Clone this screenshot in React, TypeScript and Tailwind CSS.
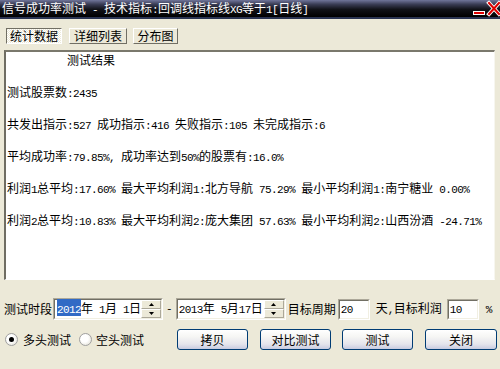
import React from 'react';

// ASCII runs get a mono face at half the CJK width, like SimSun
const Mixed: React.FC<{ text: string }> = ({ text }) => (
  <>
    {text.split(/([\x20-\x7e]+)/).map((part, i) =>
      /^[\x20-\x7e]+$/.test(part) ? (
        <span key={i} className="font-['Liberation_Mono',monospace] text-[11px] tracking-[-0.6px]">
          {part}
        </span>
      ) : (
        part
      )
    )}
  </>
);

const lines = [
  '          测试结果',
  '',
  '测试股票数:2435',
  '',
  '共发出指示:527 成功指示:416 失败指示:105 未完成指示:6',
  '',
  '平均成功率:79.85%, 成功率达到50%的股票有:16.0%',
  '',
  '利润1总平均:17.60% 最大平均利润1:北方导航 75.29% 最小平均利润1:南宁糖业 0.00%',
  '',
  '利润2总平均:10.83% 最大平均利润2:庞大集团 57.63% 最小平均利润2:山西汾酒 -24.71%',
];

const Sunken: React.FC<{ className?: string; children?: React.ReactNode }> = ({ className = '', children }) => (
  <div className={`border-t border-l border-t-[#aca899] border-l-[#aca899] border-b border-r border-b-white border-r-white ${className}`}>
    <div className="h-full w-full border-t border-l border-t-[#716f64] border-l-[#716f64] border-b border-r border-b-[#f1efe2] border-r-[#f1efe2] bg-white flex items-center">
      {children}
    </div>
  </div>
);

const Spinner = () => (
  <div className="ml-auto flex h-full w-[20px] flex-col">
    {[0, 1].map(i => (
      <div
        key={i}
        className="flex flex-1 items-center justify-center border-t border-l border-t-white border-l-white border-b border-r border-b-[#aca899] border-r-[#aca899] bg-[#ece9d8]"
      >
        <svg width="5" height="3" viewBox="0 0 5 3">
          {i === 0 ? <path d="M2.5 0 L5 3 L0 3 Z" fill="#000" /> : <path d="M0 0 L5 0 L2.5 3 Z" fill="#000" />}
        </svg>
      </div>
    ))}
  </div>
);

const Radio: React.FC<{ checked?: boolean }> = ({ checked }) => (
  <div className="flex h-[13px] w-[13px] items-center justify-center rounded-full border border-[#a0a0a0] bg-[radial-gradient(circle_at_40%_40%,#ffffff_40%,#dcd9cc_100%)]">
    {checked && <div className="h-[5px] w-[5px] rounded-full bg-[#000]" />}
  </div>
);

const XpButton: React.FC<{ label: string; className?: string }> = ({ label, className = '' }) => (
  <div
    className={`flex h-[21px] items-center justify-center rounded-[3px] border border-[#003c74] bg-[linear-gradient(to_bottom,#ffffff_0%,#f6f6f4_35%,#e4e4ec_75%,#c8cbe0_100%)] text-[12px] text-black ${className}`}
  >
    {label}
  </div>
);

export default function App() {
  return (
    <div className="flex h-[369px] w-[500px] flex-col overflow-hidden bg-[#ece9d8] font-['Noto_Sans_CJK_SC',sans-serif] text-[12px] leading-4 text-black">
      {/* title bar */}
      <div className="flex h-[17px] items-center justify-between bg-[linear-gradient(to_bottom,#70759a_0%,#3a3d55_25%,#111218_55%,#000000_100%)] pl-[2px] text-white">
        <div className="whitespace-pre">
          <Mixed text="信号成功率测试 - 技术指标:回调线指标线XG等于1[日线]" />
        </div>
        <svg width="29" height="17" viewBox="0 0 29 17">
          <rect x="2.5" y="11.5" width="11" height="3" fill="#e00000" stroke="#fff" strokeWidth="1" />
          <path d="M18 3 L28 14 M28 3 L18 14" stroke="#fff" strokeWidth="4" strokeLinecap="square" />
          <path d="M18 3 L28 14 M28 3 L18 14" stroke="#e00000" strokeWidth="2" strokeLinecap="square" />
        </svg>
      </div>
      <div className="h-[2px] bg-[#2a3452]" />

      {/* tabs */}
      <div className="mt-[9px] flex h-[16px] pl-[6px]">
        <div className="flex w-[56px] items-center justify-center border-t border-l border-t-[#716f64] border-l-[#716f64] border-b border-r border-b-white border-r-white bg-[repeating-conic-gradient(#ffffff_0_25%,#ece9d8_0_50%)] bg-[length:2px_2px]">
          统计数据
        </div>
        <div className="ml-[7px] flex w-[58px] items-center justify-center border-t border-l border-t-white border-l-white border-b border-r border-b-[#716f64] border-r-[#716f64] bg-[#ece9d8]">
          详细列表
        </div>
        <div className="ml-[6px] flex w-[45px] items-center justify-center border-t border-l border-t-white border-l-white border-b border-r border-b-[#716f64] border-r-[#716f64] bg-[#ece9d8]">
          分布图
        </div>
      </div>

      {/* result text */}
      <div className="ml-[4px] mt-[6px] h-[230px] w-[491px] border-t-2 border-l-2 border-t-[#7a786c] border-l-[#6f6d63] border-b border-r border-b-white border-r-[#f7f6ef] bg-white pl-[1px]">
        {lines.map((l, i) => (
          <div key={i} className="h-4 whitespace-pre">
            <Mixed text={l} />
          </div>
        ))}
      </div>

      {/* period row */}
      <div className="mt-[18px] flex h-[22px] items-center whitespace-pre pl-[4px]">
        <span>测试时段</span>
        <Sunken className="ml-[1px] h-[22px] w-[110px]">
          <div className="flex h-full w-full items-center pl-[2px]">
            <span className="whitespace-pre">
              <span className="bg-[#316ac5] text-white">
                <Mixed text="2012" />
              </span>
              <Mixed text="年 1月 1日" />
            </span>
            <Spinner />
          </div>
        </Sunken>
        <span className="ml-[3px] font-['Liberation_Mono',monospace] text-[11px]">-</span>
        <Sunken className="ml-[3px] h-[22px] w-[110px]">
          <div className="flex h-full w-full items-center pl-[1px]">
            <span className="whitespace-pre">
              <Mixed text="2013年 5月17日" />
            </span>
            <Spinner />
          </div>
        </Sunken>
        <span className="ml-[2px]">目标周期</span>
        <Sunken className="ml-[2px] h-[21px] w-[32px]">
          <span className="pl-[1px]">
            <Mixed text="20" />
          </span>
        </Sunken>
        <span className="ml-[6px]">
          <Mixed text="天,目标利润" />
        </span>
        <Sunken className="ml-[5px] h-[21px] w-[32px]">
          <span className="pl-[1px]">
            <Mixed text="10" />
          </span>
        </Sunken>
        <span className="ml-[7px]">
          <Mixed text="%" />
        </span>
      </div>

      {/* mode + buttons */}
      <div className="mt-[9px] flex h-[21px] items-center pl-[5px]">
        <Radio checked />
        <span className="ml-[5px]">多头测试</span>
        <div className="ml-[8px]">
          <Radio />
        </div>
        <span className="ml-[4px]">空头测试</span>
        <XpButton label="拷贝" className="ml-[33px] w-[71px]" />
        <XpButton label="对比测试" className="ml-[12px] w-[71px]" />
        <XpButton label="测试" className="ml-[11px] w-[71px]" />
        <XpButton label="关闭" className="ml-[12px] w-[72px]" />
      </div>
    </div>
  );
}
